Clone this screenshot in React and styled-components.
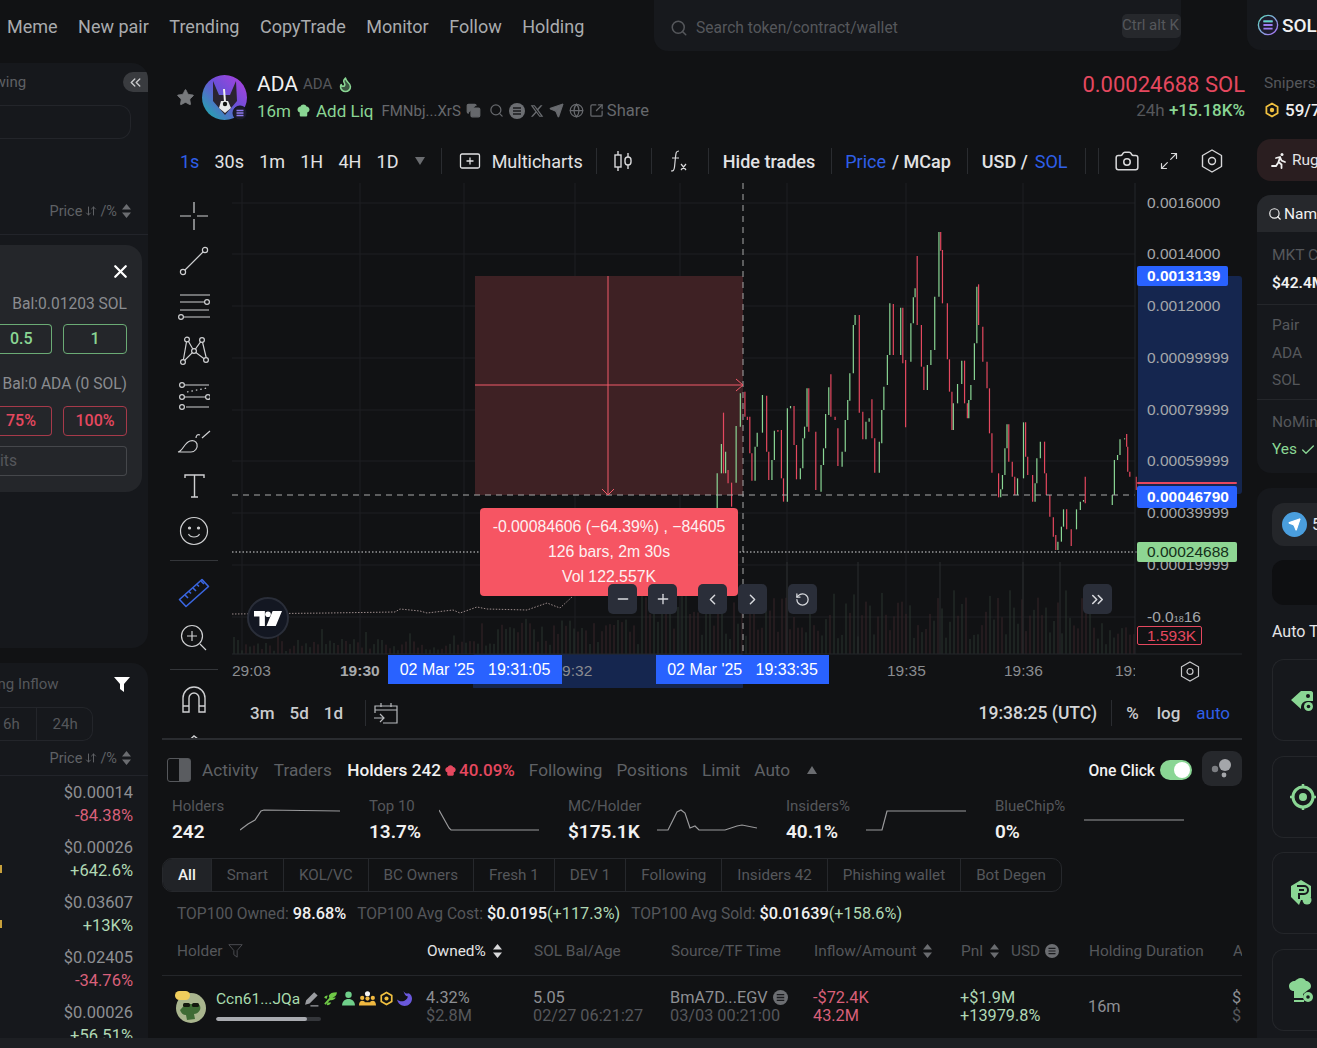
import React from 'react';
import styled, { createGlobalStyle } from 'styled-components';
import {
  ArrowDownUp, Check, ChevronLeft, ChevronRight, ChevronsLeft, ChevronsRight, Camera, Copy, Flame, Globe,
  Maximize2, Minus, Plus, RotateCcw, Search, Send, SquareArrowOutUpRight, Star, X,
} from 'lucide-react';

const GlobalStyle = createGlobalStyle`
  html, body { margin: 0; padding: 0; background: #111214; overflow: hidden; }
  body { font-family: Roboto, "Liberation Sans", sans-serif; color: #e4e4e6; }
  * { box-sizing: border-box; }
`;

const green = '#8ad694';
const red = '#e5485f';
const blue = '#2f5fe8';
const muted = '#5f6165';

// candle wicks read off the reference: [x, top, bottom, colour] in crop coordinates
const candleRows = [
  [49,850,955,'g'],[61,762,850,'g'],[67,668,850,'r'],[73,785,850,'g'],[80,840,880,'r'],[90,878,950,'r'],[103,708,878,'g'],
  [115,610,710,'g'],[128,605,680,'r'],[135,680,690,'r'],[142,680,790,'r'],[148,790,872,'r'],[157,770,872,'g'],[163,728,770,'g'],
  [178,615,728,'g'],[190,617,785,'r'],[196,785,870,'r'],[205,810,870,'g'],[212,722,810,'g'],[222,720,725,'r'],[232,720,865,'r'],
  [238,865,935,'r'],[249,655,935,'g'],[258,648,655,'g'],[268,648,765,'r'],[275,765,868,'r'],[286,835,868,'g'],[293,745,835,'g'],
  [298,710,745,'g'],[305,595,710,'g'],[310,595,725,'r'],[330,725,900,'r'],[345,825,905,'g'],[352,775,825,'g'],[358,672,775,'g'],
  [367,592,675,'g'],[373,553,680,'r'],[385,680,690,'r'],[393,715,828,'r'],[405,785,830,'g'],[414,690,785,'g'],[421,630,690,'g'],
  [427,550,632,'g'],[437,405,550,'g'],[442,375,405,'g'],[454,375,668,'r'],[464,665,748,'r'],[473,695,748,'g'],[482,685,695,'g'],
  [490,628,745,'r'],[498,745,848,'r'],[511,755,848,'g'],[518,660,760,'g'],[524,590,660,'g'],[534,495,585,'g'],[541,340,495,'g'],
  [551,342,495,'r'],[572,353,495,'g'],[578,353,520,'r'],[586,510,712,'r'],[601,400,515,'g'],[608,322,400,'g'],[613,295,322,'g'],
  [619,198,405,'r'],[631,405,530,'r'],[638,530,600,'r'],[648,525,600,'g'],[658,480,525,'g'],[669,320,480,'g'],[681,126,320,'g'],
  [686,126,182,'r'],[691,180,340,'r'],[705,340,508,'r'],[711,508,605,'r'],[718,605,720,'r'],[722,640,720,'g'],[734,582,640,'g'],
  [746,512,582,'g'],[754,512,640,'r'],[762,640,685,'r'],[766,630,685,'g'],[772,585,630,'g'],[782,460,570,'g'],[789,290,460,'g'],
  [794,283,405,'r'],[806,410,515,'r'],[818,515,595,'r'],[825,595,730,'r'],[832,730,848,'r'],[851,850,922,'r'],[857,898,922,'g'],
  [862,855,898,'g'],[869,775,855,'g'],[875,703,775,'g'],[880,703,815,'r'],[890,815,860,'r'],[897,860,915,'r'],[905,865,915,'g'],
  [922,697,865,'g'],[928,697,800,'r'],[934,800,855,'r'],[948,855,935,'r'],[955,880,935,'g'],[960,805,880,'g'],[970,755,805,'g'],
  [982,755,850,'r'],[987,850,915,'r'],[997,915,980,'r'],[1007,982,1040,'r'],[1014,1035,1080,'r'],[1020,1055,1080,'g'],
  [1030,1010,1055,'g'],[1036,958,1010,'g'],[1045,958,1018,'r'],[1058,1018,1068,'r'],[1073,958,1018,'g'],[1084,935,960,'g'],
  [1093,930,935,'g'],[1098,860,940,'r'],[1175,915,945,'g'],[1181,810,915,'g'],[1190,795,810,'g'],[1197,748,795,'g'],
  [1210,745,748,'g'],[1216,732,770,'r'],[1219,770,845,'r'],[1225,845,860,'r'],[1243,860,900,'r'],
];

const candles = candleRows.map(([x, top, bottom, c]) => ({
  x: 700 + x / 2.85, top: 190 + top / 3, bottom: 190 + bottom / 3, color: c === 'g' ? green : red,
}));

const volumeBars = Array.from({ length: 226 }, (_, i) => {
  const x = 234 + i * 4;
  const noise = Math.abs(Math.sin(i * 12.9898) * 43758.5453) % 1;
  let h = 3 + noise * 12;
  if (i % 11 === 0) h += 14;
  if (x > 470) h = 8 + noise * 28;
  if (x > 640) h = 15 + noise * 50;
  if (x > 1100) h = 6 + noise * 28;
  return { x, h, up: Math.floor(noise * 7) % 2 === 0 };
});

const volumeSpikes = [787, 858, 940, 1023, 1060];

const priceTicks = [
  ['0.0016000', 203], ['0.0014000', 254], ['0.0012000', 306], ['0.00099999', 358], ['0.00079999', 410],
  ['0.00059999', 461], ['0.00039999', 513], ['0.00019999', 565],
];

const hLines = [203, 254, 306, 358, 410, 461, 513, 565, 617];
const vLines = [242, 360, 464, 575, 680, 787, 906, 1023];
const timeframes = ['30s', '1m', '1H', '4H', '1D'];
const filters = ['Smart', 'KOL/VC', 'BC Owners', 'Fresh 1', 'DEV 1', 'Following', 'Insiders 42', 'Phishing wallet', 'Bot Degen'];
const tabsBefore = ['Activity', 'Traders'];
const tabsAfter = ['Following', 'Positions', 'Limit', 'Auto'];
const stats = [
  { label: 'Holders', value: '242', w: 68, points: '0,26 8,20 15,16 21,7 24,6 100,7' },
  { label: 'Top 10', value: '13.7%', w: 70, points: '0,6 10,24 12,26 100,26' },
  { label: 'MC/Holder', value: '$175.1K', w: 89, points: '0,26 11,26 20,8 24,6 28,9 33,24 38,22 42,26 68,26 80,22 85,21 100,24' },
  { label: 'Insiders%', value: '40.1%', w: 80, points: '0,26 16,26 21,7 100,7' },
  { label: 'BlueChip%', value: '0%', w: 89, points: '0,16 100,16' },
];
const sidePrices = [
  ['$0.00014', '-84.38%', false, false],
  ['$0.00026', '+642.6%', true, true],
  ['$0.03607', '+13K%', true, true],
  ['$0.02405', '-34.76%', false, false],
  ['$0.00026', '+56.51%', true, false],
];

const Root = styled.div`
  width: 100vw;
  height: 100vh;
  overflow: hidden;
  display: flex;
  flex-direction: column;
  background: #111214;
`;

const TopBar = styled.header`
  height: 54px;
  flex: none;
  display: flex;
  align-items: flex-start;
  padding-left: 7px;
`;

const TopNav = styled.nav`
  display: flex;
  flex: none;
  gap: 20.5px;
  width: 647px;
  padding-top: 16px;
  font-size: 18px;
  line-height: 22px;
  color: #a9abae;
`;

const SearchBox = styled.div`
  width: 527px;
  height: 51px;
  flex: none;
  padding: 4px 0 0 16px;
  border-radius: 0 0 14px 14px;
  background: #17191d;
  display: flex;
  align-items: center;
  gap: 8px;
  color: #55575b;
  font-size: 15.6px;
`;

const Kbd = styled.span`
  margin-left: auto;
  margin-top: -4px;
  width: 59px;
  height: 24px;
  border-radius: 5px;
  background: #26282c;
  color: #55575b;
  font-size: 15px;
  line-height: 23px;
  white-space: nowrap;
  overflow: hidden;
`;

const NetworkChip = styled.div`
  margin-left: 66px;
  flex: none;
  width: 120px;
  height: 50px;
  border-radius: 0 0 0 14px;
  background: #16181c;
  display: flex;
  align-items: center;
  gap: 3px;
  padding-left: 10px;
  font-size: 19px;
  font-weight: 500;
  color: #f0f0f0;
`;

const Body = styled.div`
  display: flex;
  height: 984px;
  flex: none;
`;

const Sidebar = styled.aside`
  width: 148px;
  flex: none;
  padding-top: 9px;
  display: flex;
  flex-direction: column;
  gap: 15px;
`;

const SidePanel = styled.section`
  background: #16181c;
  border-radius: ${p => (p.$bottom ? '0 16px 0 0' : '0 16px 16px 0')};
  height: ${p => p.$h}px;
  overflow: hidden;
  font-size: 15px;
  color: ${muted};
`;

const SideHeading = styled.div`
  display: flex;
  justify-content: space-between;
  align-items: center;
  height: 20px;
  margin-top: 9px;
  margin-left: ${p => p.$ml}px;
  white-space: nowrap;
`;

const Collapse = styled.button`
  width: 25px;
  height: 20px;
  border: 0;
  padding: 0;
  border-radius: 10px 0 0 10px;
  background: #393b3f;
  color: #c6c7c9;
  display: flex;
  align-items: center;
  justify-content: center;
`;

const SideSearch = styled.div`
  width: 131px;
  height: 34px;
  margin-top: 13px;
  border: 1px solid #23252a;
  border-left: 0;
  border-radius: 0 12px 12px 0;
`;

const PriceSort = styled.div`
  display: flex;
  justify-content: flex-end;
  align-items: center;
  gap: 3px;
  padding-right: 17px;
  height: ${p => p.$h}px;
  margin-top: ${p => p.$mt}px;
  border-bottom: 1px solid #22242a;
  font-size: 14.5px;
  white-space: nowrap;
`;

const SortStack = styled.svg`
  width: 9px;
  height: 14px;
  margin-left: 2px;
  fill: ${p => p.$color || '#6a6c70'};
  flex: none;
`;

const TradeCard = styled.div`
  width: 142px;
  height: 247px;
  margin-top: 10px;
  padding: 16px 15px 0 0;
  border-radius: 0 16px 16px 0;
  background: #24262a;
  display: flex;
  flex-direction: column;
  align-items: flex-end;
  font-size: 15.6px;
  color: #8a8c90;
  white-space: nowrap;
`;

const CloseButton = styled.div`
  color: #fff;
  height: 24px;
  margin-bottom: 10px;
  margin-right: -4px;
`;

const BalanceLine = styled.span`
  margin-top: ${p => p.$mt ?? 0}px;
`;

const QuickRow = styled.div`
  display: flex;
  gap: 11px;
  margin-top: ${p => p.$mt}px;
`;

const QuickButton = styled.div`
  width: ${p => p.$w}px;
  height: 30px;
  border: 1px solid ${p => (p.$sell ? '#a63a4a' : '#6bab75')};
  border-left-width: ${p => (p.$cut ? 0 : 1)}px;
  border-radius: ${p => (p.$cut ? '0 4px 4px 0' : '4px')};
  color: ${p => (p.$sell ? red : green)};
  font-size: 16px;
  font-weight: 500;
  line-height: 28px;
  text-align: ${p => (p.$cut ? 'left' : 'center')};
  padding-left: ${p => p.$pl ?? 0}px;
`;

const LimitInput = styled.div`
  width: 127px;
  height: 30px;
  margin-top: 10px;
  border: 1px solid #45474b;
  border-left: 0;
  border-radius: 0 4px 4px 0;
  color: #55575b;
  line-height: 28px;
`;

const FilterHead = styled.div`
  display: flex;
  justify-content: space-between;
  align-items: center;
  height: 20px;
  margin: 11px 17px 0 -36px;
  white-space: nowrap;
  font-size: 15px;
  color: #55575b;
`;

const RangeTabs = styled.div`
  display: flex;
  width: 93px;
  height: 34px;
  margin-top: 13px;
  border: 1px solid #23252a;
  border-left: 0;
  border-radius: 0 10px 10px 0;
  color: #55575b;
`;

const RangeTab = styled.span`
  line-height: 32px;
  width: ${p => p.$w}px;
  padding-left: ${p => p.$pl}px;
  border-left: ${p => (p.$line ? '1px solid #23252a' : '0')};
`;

const SideRow = styled.div`
  height: 55px;
  padding-right: 15px;
  position: relative;
  display: flex;
  flex-direction: column;
  align-items: flex-end;
  justify-content: center;
  font-size: 16.5px;
  line-height: 23px;
  color: #8d8f93;
`;

const SideChange = styled.span`
  color: ${p => (p.$up ? '#b0d8b4' : '#d9607a')};
`;

const EdgeMark = styled.i`
  position: absolute;
  left: 0;
  top: 34px;
  width: 2px;
  height: 8px;
  background: #c9a13c;
`;

const Main = styled.main`
  margin-left: 14px;
  padding-top: 9px;
  flex: none;
  width: 1155px;
`;

const TokenHeader = styled.div`
  height: 67px;
  display: flex;
  white-space: nowrap;
`;

const TokenLeft = styled.div`
  flex: 1;
  display: flex;
  align-items: center;
  padding: 2px 0 0 14px;
  color: #77797c;
`;

const Avatar = styled.svg`
  width: 45px;
  height: 45px;
  margin: 0 10px 0 7px;
  flex: none;
`;

const TokenLines = styled.div`
  display: flex;
  flex-direction: column;
  gap: 1px;
`;

const TokenName = styled.div`
  display: flex;
  align-items: center;
  gap: 5px;
  height: 25px;
  font-size: 21px;
  color: #f1f1f1;
`;

const TokenTicker = styled.span`
  font-size: 15px;
  color: #55575b;
`;

const TokenMeta = styled.div`
  display: flex;
  align-items: center;
  height: 26px;
  gap: 5px;
  color: #66686c;
  font-size: 15px;
`;

const GreenText = styled.span`
  color: ${green};
  font-size: 17px;
`;

const Address = styled.span`
  margin: 0 0 0 3px;
  font-size: 15px;
`;

const ShareText = styled.span`
  margin-left: -2px;
  font-size: 16.5px;
`;

const PriceBlock = styled.div`
  flex: none;
  text-align: right;
  padding-top: 9px;
`;

const LastPrice = styled.div`
  color: ${red};
  font-size: 22px;
  line-height: 25px;
`;

const DayChange = styled.div`
  margin-top: 1px;
  font-size: 17px;
  line-height: 24px;
  color: #55575b;
  b {
    color: ${green};
    font-weight: 500;
  }
`;

const SnipersBlock = styled.div`
  flex: none;
  width: 53px;
  margin-left: 19px;
  padding-top: 8px;
  font-size: 15.5px;
  color: #55575b;
  line-height: 25px;
`;

const SnipersValue = styled.div`
  display: flex;
  align-items: center;
  gap: 5px;
  margin-top: 2px;
  color: #f0f0f0;
  font-size: 17px;
  font-weight: 500;
  line-height: 24px;
  svg {
    flex: none;
  }
`;

const Lower = styled.div`
  display: flex;
  gap: 15px;
  padding-top: 9px;
`;

const Center = styled.div`
  width: 1080px;
  flex: none;
`;

const Toolbar = styled.div`
  height: 44px;
  display: flex;
  align-items: center;
  padding-left: 18px;
  font-size: 18px;
  color: #e2e2e4;
  white-space: nowrap;
`;

const ToolLabel = styled.span`
  margin-right: ${p => p.$mr ?? 0}px;
  margin-left: ${p => p.$ml ?? 0}px;
  color: ${p => (p.$active ? blue : 'inherit')};
  font-weight: ${p => (p.$medium ? 500 : 400)};
`;

const ToolSep = styled.i`
  width: 1px;
  height: 26px;
  background: #2a2c30;
  margin: 0 ${p => p.$r ?? 14}px 0 ${p => p.$l ?? 14}px;
  flex: none;
`;

const ToolIcon = styled.span`
  display: flex;
  flex: none;
  margin-left: ${p => p.$ml ?? 0}px;
  color: #d8d8da;
`;

const Triangle = styled.i`
  width: 0;
  height: 0;
  border-left: 5.5px solid transparent;
  border-right: 5.5px solid transparent;
  border-${p => (p.$up ? 'bottom' : 'top')}: 8px solid #6a6c70;
  margin-left: ${p => p.$ml}px;
  flex: none;
`;

const ChartArea = styled.div`
  height: 557px;
  display: flex;
  border-bottom: 2px solid #2a2c30;
`;

const ToolColumn = styled.div`
  width: 70px;
  flex: none;
  height: 555px;
  overflow: hidden;
  padding: 10px 6px 0 0;
  display: flex;
  flex-direction: column;
  align-items: center;
`;

const ToolItem = styled.div`
  height: 45px;
  flex: none;
  display: flex;
  align-items: center;
  justify-content: center;
`;

const ToolDivider = styled.i`
  width: 48px;
  height: 1px;
  flex: none;
  background: #34363a;
  margin: ${p => p.$mt}px 0 ${p => p.$mb}px;
`;

const PlotColumn = styled.div`
  flex: 1;
  min-width: 0;
`;

const Plot = styled.div`
  position: relative;
  width: 1010px;
  height: 505px;
  overflow: hidden;
`;

const PlotSvg = styled.svg`
  display: block;
  font-family: "Liberation Sans", Arial, sans-serif;
`;

const MeasureBox = styled.div`
  position: absolute;
  left: 248px;
  top: 325px;
  width: 258px;
  height: 88px;
  border-radius: 4px;
  background: #f65563;
  color: #fdf0f1;
  font-family: "Liberation Sans", Arial, sans-serif;
  font-size: 15.8px;
  line-height: 25px;
  padding-top: 6px;
  text-align: center;
  white-space: nowrap;
`;

const ChartButton = styled.button`
  position: absolute;
  left: ${p => p.$x}px;
  top: 401px;
  width: 29px;
  height: 30px;
  padding: 0;
  border: 0;
  border-radius: 5px;
  background: #2a2e39;
  color: #d8dade;
  display: flex;
  align-items: center;
  justify-content: center;
`;

const ChartBadge = styled.div`
  position: absolute;
  left: 15px;
  top: 414px;
  width: 42px;
  height: 42px;
  border-radius: 50%;
  background: #131722;
  border: 2px solid #2a2e39;
  display: flex;
  align-items: center;
  justify-content: center;
`;

const PriceTag = styled.div`
  position: absolute;
  left: 905px;
  top: ${p => p.$top}px;
  width: ${p => p.$w}px;
  height: ${p => p.$h ?? 20}px;
  border-radius: 2px;
  background: ${p => p.$bg};
  color: ${p => p.$fg};
  font-family: "Liberation Sans", Arial, sans-serif;
  font-size: 15.5px;
  font-weight: ${p => p.$weight ?? 400};
  line-height: ${p => p.$h ?? 20}px;
  padding-left: 10px;
`;

const VolumeTag = styled(PriceTag)`
  border: 1px solid ${red};
  background: #111214;
  line-height: 17px;
  padding-left: 9px;
`;

const TimeTag = styled.div`
  position: absolute;
  left: ${p => p.$x}px;
  top: 472px;
  width: ${p => p.$w}px;
  height: 29px;
  background: #2962ff;
  color: #fff;
  font-family: "Liberation Sans", Arial, sans-serif;
  font-size: 16px;
  line-height: 29px;
  text-align: center;
  white-space: pre;
`;

const ChartFoot = styled.div`
  height: 50px;
  display: flex;
  align-items: center;
  padding: 0 12px 0 18px;
  font-size: 17px;
  font-weight: 500;
  color: #c9cbce;
`;

const RangeLabel = styled.span`
  margin-right: ${p => p.$mr ?? 15}px;
`;

const FootClock = styled.span`
  margin-left: auto;
  font-size: 17.5px;
  color: #d4d6d8;
`;

const Holders = styled.section`
  height: 298px;
  overflow: hidden;
`;

const TabBar = styled.div`
  height: 48px;
  display: flex;
  align-items: center;
  font-size: 17.2px;
  color: ${muted};
  white-space: nowrap;
  padding-top: 12px;
`;

const TabText = styled.span`
  margin-right: ${p => p.$mr ?? 14}px;
  color: ${p => (p.$on ? '#f1f1f1' : 'inherit')};
  font-weight: ${p => (p.$on ? 500 : 400)};
`;

const DrawerToggle = styled.i`
  margin: 0 11px 0 5px;
  width: 24px;
  height: 24px;
  border: 1px solid #55575b;
  border-radius: 3px;
  background: linear-gradient(to right, #111214 50%, #5a5c60 50%);
  flex: none;
`;

const RedRate = styled.span`
  color: ${red};
  margin: 0 14px 0 2px;
  font-weight: 500;
  font-size: 17px;
`;

const OneClick = styled.div`
  margin-left: auto;
  display: flex;
  align-items: center;
  gap: 5px;
  color: #f1f1f1;
  font-size: 15.7px;
  font-weight: 500;
`;

const Switch = styled.i`
  width: 32px;
  height: 20px;
  padding: 2px;
  border-radius: 10px;
  background: ${green};
  display: flex;
  justify-content: flex-end;
  &::after {
    content: '';
    width: 16px;
    height: 16px;
    border-radius: 50%;
    background: #fff;
  }
`;

const BubbleButton = styled.div`
  width: 40px;
  height: 35px;
  margin-left: 5px;
  margin-top: -4px;
  border-radius: 9px;
  background: #26282c;
  display: flex;
  align-items: center;
  justify-content: center;
`;

const StatRow = styled.div`
  height: 70px;
  display: grid;
  grid-template-columns: 197px 199px 218px 209px 200px;
  padding: 8px 0 0 10px;
`;

const Stat = styled.div`
  display: flex;
  align-items: flex-start;
`;

const Spark = styled.svg`
  margin-top: 8px;
  flex: none;
`;

const StatText = styled.div`
  width: ${p => p.$w}px;
  flex: none;
  font-size: 15px;
  line-height: 20px;
  color: #55575b;
  b {
    display: block;
    margin-top: 6px;
    font-size: 19px;
    line-height: 20px;
    font-weight: 600;
    color: #f1f1f1;
  }
`;

const FilterTabs = styled.div`
  display: inline-flex;
  height: 34px;
  border: 1px solid #26282c;
  border-radius: 10px;
  overflow: hidden;
  font-size: 15.2px;
  color: #55575b;
  white-space: nowrap;
  vertical-align: top;
`;

const FilterTab = styled.span`
  padding: 0 15px;
  line-height: 32px;
  border-left: ${p => (p.$first ? '0' : '1px solid #26282c')};
  background: ${p => (p.$first ? '#212327' : 'transparent')};
  color: ${p => (p.$first ? '#f1f1f1' : 'inherit')};
  font-weight: ${p => (p.$first ? 500 : 400)};
`;

const Summary = styled.div`
  display: flex;
  height: 42px;
  align-items: center;
  padding-left: 15px;
  font-size: 15.6px;
  color: #55575b;
  white-space: nowrap;
  b {
    color: #f1f1f1;
    font-size: 16.3px;
    font-weight: 500;
    margin-left: 4px;
  }
  em {
    color: #b0d8b4;
    font-size: 16.3px;
    font-style: normal;
  }
  span + span {
    margin-left: 11px;
  }
`;

const TableHead = styled.div`
  display: grid;
  grid-template-columns: 250px 107px 137px 143px 147px 128px 144px 30px;
  height: 42px;
  padding: 0 0 8px 15px;
  align-items: center;
  border-bottom: 1px solid #24262a;
  font-size: 15.4px;
  color: #55575b;
  white-space: nowrap;
`;

const HeadCell = styled.span`
  display: flex;
  align-items: center;
  gap: 5px;
  color: ${p => (p.$on ? '#e4e4e6' : 'inherit')};
`;

const UsdLabel = styled.span`
  margin-left: 7px;
`;

const TableRow = styled.div`
  display: grid;
  grid-template-columns: 252px 107px 137px 143px 147px 128px 144px 30px;
  height: 61px;
  padding: 0 0 0 12px;
  align-items: center;
  font-size: 16.3px;
  line-height: 18px;
  color: #8d8f93;
  white-space: nowrap;
`;

const HolderCell = styled.div`
  display: flex;
  gap: 10px;
  align-items: center;
`;

const HolderAvatar = styled.svg`
  width: 32px;
  height: 32px;
  flex: none;
`;

const HolderInfo = styled.div`
  margin-top: -3px;
`;

const HolderName = styled.div`
  display: flex;
  align-items: center;
  gap: 3px;
  color: #a9dcae;
  font-size: 15.5px;
`;

const OwnBar = styled.div`
  width: 105px;
  height: 4px;
  margin-top: 9px;
  border-radius: 2px;
  background: #34363a;
  overflow: hidden;
`;

const OwnFill = styled.div`
  height: 100%;
  background: #a9abb0;
  border-radius: 2px;
`;

const Cell = styled.div`
  color: ${p => p.$color || 'inherit'};
`;

const SubLine = styled.div`
  display: flex;
  align-items: center;
  gap: 5px;
  color: ${p => p.$color || '#55575b'};
`;

const Footer = styled.div`
  flex: 1;
  background: #1d1f23;
`;

const RightColumn = styled.div`
  width: 200px;
  flex: none;
  font-size: 16px;
  white-space: nowrap;
`;

const RugChip = styled.div`
  height: 42px;
  border-radius: 14px 0 0 14px;
  background: #2a1e20;
  display: flex;
  align-items: center;
  gap: 4px;
  padding-left: 14px;
  color: #e4e4e6;
  font-size: 15.5px;
`;

const InfoCard = styled.div`
  margin-top: 14px;
  height: 278px;
  border-radius: 14px 0 0 14px;
  background: #16181c;
  color: #55575b;
  font-size: 15.5px;
  overflow: hidden;
`;

const InfoHead = styled.div`
  height: 37px;
  background: #26282c;
  display: flex;
  align-items: center;
  gap: 2px;
  padding-left: 11px;
  color: #f1f1f1;
`;

const InfoBlock = styled.div`
  padding: ${p => p.$pad};
  line-height: 27.5px;
  border-bottom: ${p => (p.$last ? '0' : '1px solid #24262a')};
  b {
    color: #f1f1f1;
    font-weight: 600;
  }
`;

const YesRow = styled.div`
  display: flex;
  align-items: center;
  gap: 3px;
  color: ${green};
`;

const ToolsCard = styled.div`
  margin-top: 15px;
  height: 550px;
  padding: 15px 0 0 15px;
  border-radius: 14px 0 0 0;
  background: #16181c;
`;

const TelegramButton = styled.div`
  height: 43px;
  border-radius: 12px 0 0 12px;
  background: #24262a;
  display: flex;
  align-items: center;
  gap: 5px;
  padding-left: 10px;
  color: #e4e4e6;
`;

const TelegramDot = styled.i`
  width: 25px;
  height: 25px;
  border-radius: 50%;
  background: #4a9edd;
  display: flex;
  align-items: center;
  justify-content: center;
  color: #fff;
`;

const DarkButton = styled.div`
  height: 45px;
  margin-top: 14px;
  border-radius: 12px 0 0 12px;
  background: #0e0f11;
`;

const AutoLabel = styled.div`
  margin: 17px 0 17px;
  line-height: 20px;
  color: #e4e4e6;
`;

const FeatureCard = styled.div`
  height: 82px;
  margin-bottom: 14.5px;
  border: 1px solid #24262a;
  border-right: 0;
  border-radius: 12px 0 0 12px;
  padding-left: 16px;
  display: flex;
  align-items: center;
  color: ${green};
`;

const SolMark = ({ size = 24 }) => (
  <svg width={size} height={size} viewBox="0 0 24 24">
    <defs>
      <linearGradient id="solEdge" x1="0" y1="0" x2="1" y2="1">
        <stop offset="0" stopColor="#5fe0c0" />
        <stop offset="1" stopColor="#a96bf5" />
      </linearGradient>
    </defs>
    <circle cx="12" cy="12" r="10.5" fill="#1c1b2b" stroke="url(#solEdge)" strokeWidth="1.5" />
    <path d="M7 8h10M7 12h10M7 16h10" strokeWidth="2" stroke="#9b7bf0" />
    <path d="M7 8h10" strokeWidth="2" stroke="#5fd8c4" />
  </svg>
);

const GrayCoin = ({ size = 16 }) => (
  <svg width={size} height={size} viewBox="0 0 16 16">
    <circle cx="8" cy="8" r="8" fill="#6c6e72" />
    <path d="M4 5h8M4 8h8M4 11h8" stroke="#1a1b1e" strokeWidth="1.4" />
  </svg>
);

const ChefHat = ({ size = 15, color = green }) => (
  <svg width={size} height={size} viewBox="0 0 16 16" fill={color}>
    <path d="M8 1.5c-1.6 0-2.8.9-3.2 2.1C3 3.8 1.6 5.2 1.6 7c0 1.5 1 2.8 2.4 3.2V13c0 .8.6 1.4 1.4 1.4h5.2c.8 0 1.4-.6 1.4-1.4v-2.8c1.4-.4 2.4-1.7 2.4-3.2 0-1.8-1.4-3.2-3.2-3.4C10.8 2.4 9.6 1.5 8 1.5z" />
  </svg>
);

const XLogo = () => (
  <svg width="14" height="14" viewBox="0 0 24 24" fill="#6a6c70">
    <path d="M18.2 2h3.3l-7.2 8.3L22.8 22h-6.7l-5.2-6.8L4.9 22H1.6l7.7-8.8L1.2 2h6.8l4.7 6.2L18.2 2zm-1.2 18h1.8L7 3.9H5L17 20z" />
  </svg>
);

const Target = ({ size = 16, color = '#f0c040' }) => (
  <svg width={size} height={size} viewBox="0 0 16 16" fill="none" stroke={color} strokeWidth="1.8">
    <path d="M8 1.5L13.6 4.7V11.3L8 14.5 2.4 11.3V4.7z" strokeLinejoin="round" />
    <circle cx="8" cy="8" r="2.2" fill={color} stroke="none" />
  </svg>
);

const TargetRing = () => (
  <svg width="28" height="28" viewBox="0 0 28 28" fill="none" stroke={green} strokeWidth="3">
    <circle cx="14" cy="14" r="10" />
    <circle cx="14" cy="14" r="4" fill={green} stroke="none" />
    <path d="M14 1v3M14 24v3M1 14h3M24 14h3" strokeWidth="2.5" />
  </svg>
);

const Sort = ({ color }) => (
  <SortStack viewBox="0 0 9 14" $color={color}>
    <path d="M4.5 0L9 5.5H0zM4.5 14L0 8.5h9z" />
  </SortStack>
);

const Funnel = ({ size = 18, color = '#fff', outline }) => (
  <svg width={size} height={size} viewBox="0 0 18 18" fill={outline ? 'none' : color} stroke={outline ? color : 'none'} strokeWidth="1">
    <path d="M1 2h16l-6 7v8l-4-3V9z" strokeLinejoin="round" />
  </svg>
);

const DogAvatar = () => (
  <Avatar viewBox="0 0 45 45">
    <defs>
      <linearGradient id="dogBg" x1="0" y1="1" x2="1" y2="0">
        <stop offset="0" stopColor="#14b8a6" />
        <stop offset="0.55" stopColor="#6d4fd8" />
        <stop offset="1" stopColor="#b43fe0" />
      </linearGradient>
    </defs>
    <circle cx="22.5" cy="22.5" r="22.5" fill="url(#dogBg)" />
    <path d="M11 6l6 14h11l6-14 1 20-12 14-12-14z" fill="#2a2430" />
    <path d="M19 26h7l3 7-6 5-6-5z" fill="#e8e8ea" />
    <path d="M22 14l1 13" stroke="#f0f0f0" strokeWidth="2" />
    <circle cx="23" cy="29" r="2.2" fill="#111" />
    <circle cx="38" cy="38" r="7" fill="#1c1b2b" stroke="#10131a" strokeWidth="1" />
    <path d="M34.5 35.5h7M34.5 38h7M34.5 40.5h7" stroke="#8e7bf0" strokeWidth="1.3" />
  </Avatar>
);

const strokeIcon = { fill: 'none', stroke: '#cfd0d2', strokeWidth: 1.2 };

const Crosshair = () => (
  <svg width="30" height="30" viewBox="0 0 30 30" {...strokeIcon}>
    <path d="M15 1v11M15 18v11M1 15h11M18 15h11" />
  </svg>
);

const TrendTool = () => (
  <svg width="30" height="30" viewBox="0 0 30 30" {...strokeIcon}>
    <path d="M5 25L25 5" />
    <circle cx="4" cy="26" r="2.6" fill="#111214" />
    <circle cx="26" cy="4" r="2.6" fill="#111214" />
  </svg>
);

const ChannelTool = () => (
  <svg width="34" height="30" viewBox="0 0 34 30" {...strokeIcon}>
    <path d="M3 4h30M3 11h27M3 19h29M6 26h27" />
    <circle cx="30" cy="11" r="2.4" fill="#111214" />
    <circle cx="4" cy="26" r="2.4" fill="#111214" />
  </svg>
);

const PatternTool = () => (
  <svg width="32" height="30" viewBox="0 0 32 30" {...strokeIcon}>
    <path d="M5 26L9 3l7 12L24 4l5 21-13-10z" />
    <circle cx="5" cy="26" r="2.4" fill="#111214" />
    <circle cx="9" cy="3.5" r="2.4" fill="#111214" />
    <circle cx="16" cy="15" r="2.4" fill="#111214" />
    <circle cx="24" cy="4" r="2.4" fill="#111214" />
    <circle cx="28" cy="24" r="2.4" fill="#111214" />
  </svg>
);

const FibTool = () => (
  <svg width="32" height="30" viewBox="0 0 32 30" {...strokeIcon}>
    <path d="M7 4h24M6 16h22M8 26h23" />
    <path d="M9 11l20-4" strokeDasharray="1.5 3" />
    <circle cx="4" cy="4" r="2.4" />
    <circle cx="4" cy="16" r="2.4" />
    <circle cx="30" cy="16" r="2.4" />
    <circle cx="4" cy="26" r="2.4" />
  </svg>
);

const BrushTool = () => (
  <svg width="34" height="30" viewBox="0 0 34 30" {...strokeIcon}>
    <path d="M1 26c5-1 6-9 12-11 3-1 6 0 7 3 1 4-2 8-6 8zM19 12c0-3 2-4 4-3M25 12l8-7" />
  </svg>
);

const TextTool = () => (
  <svg width="30" height="30" viewBox="0 0 30 30" {...strokeIcon} strokeWidth="1.4">
    <path d="M6 7V4h19v3M15.5 4v22M12 26h7" />
  </svg>
);

const SmileTool = () => (
  <svg width="30" height="30" viewBox="0 0 30 30" {...strokeIcon}>
    <circle cx="15" cy="15" r="13.5" />
    <path d="M9.5 18c2 4 9 4 11 0" />
    <circle cx="10.5" cy="12" r="1" fill="#cfd0d2" />
    <circle cx="19.5" cy="12" r="1" fill="#cfd0d2" />
  </svg>
);

const RulerTool = () => (
  <svg width="32" height="30" viewBox="0 0 32 30" fill="none" stroke="#3a66e0" strokeWidth="1.6">
    <path d="M1.5 21.5L24 1.5l6.5 7L8 28.5z" strokeLinejoin="round" />
    <path d="M7 17l3 3M11 13.5l2 2M15 10l3 3M19 6.5l2 2M23 3l3 3" />
  </svg>
);

const ZoomTool = () => (
  <svg width="30" height="30" viewBox="0 0 30 30" {...strokeIcon}>
    <circle cx="13" cy="13" r="10.5" />
    <path d="M13 8v10M8 13h10M21 21l6 6" />
  </svg>
);

const MagnetTool = () => (
  <svg width="26" height="28" viewBox="0 0 26 28" {...strokeIcon} strokeWidth="1.4">
    <path d="M2 26V12a11 11 0 0122 0v14h-6V12a5 5 0 00-10 0v14zM2 20h6M18 20h6" />
  </svg>
);

const LockTool = () => (
  <svg width="26" height="24" viewBox="0 0 26 24" {...strokeIcon} strokeWidth="1.4">
    <path d="M3 12L13 3l8 6-10 10M8 8l8 6" />
  </svg>
);

const LayoutPlus = () => (
  <svg width="22" height="20" viewBox="0 0 22 20" fill="none" stroke="#e2e2e4" strokeWidth="1.3">
    <rect x="1.5" y="3" width="19" height="14" rx="1.5" />
    <path d="M11 6.5v7M7.5 10h7" />
  </svg>
);

const CandleIcon = () => (
  <svg width="20" height="22" viewBox="0 0 20 22" fill="none" stroke="#d8d8da" strokeWidth="1.4">
    <rect x="2" y="5" width="6" height="12" />
    <path d="M5 1v4M5 17v4" />
    <rect x="12" y="7" width="6" height="8" rx="3" />
    <path d="M15 3v4M15 15v4" />
  </svg>
);

const FormulaIcon = () => (
  <svg width="22" height="24" viewBox="0 0 22 24" fill="none" stroke="#d8d8da" strokeWidth="1.2">
    <path d="M11 2C8 2 8 4 7.5 8L6.5 18C6 22 5 22 3 22M4 9h7M13 15l5 6M18 15l-5 6" />
  </svg>
);

const HexIcon = ({ size = 26 }) => (
  <svg width={size} height={size} viewBox="0 0 26 26" fill="none" stroke="#d8d8da" strokeWidth="1.4">
    <path d="M13 2l9.5 5.5v11L13 24l-9.5-5.5v-11z" strokeLinejoin="round" />
    <circle cx="13" cy="13" r="3.5" />
  </svg>
);

const CalendarIcon = () => (
  <svg width="26" height="24" viewBox="0 0 26 24" fill="none" stroke="#b8babd" strokeWidth="1.2">
    <path d="M2 12V5h22v17H10M2 9h22M8 2v4M18 2v4M1 17h10M7 13l4 4-4 4" />
  </svg>
);

const RunnerIcon = () => (
  <svg width="17" height="17" viewBox="0 0 17 17" fill="none" stroke="#f0f0f0" strokeWidth="1.8" strokeLinecap="round">
    <circle cx="11" cy="2.6" r="1.5" fill="#f0f0f0" stroke="none" />
    <path d="M5 6l4-1 1.5 3.5L14 10M9 5.5L7.5 10l3 2.5V16M7 11l-2 3H1" />
  </svg>
);

const TvLogo = () => (
  <svg width="28" height="15" viewBox="0 0 36 19" fill="#fff">
    <path d="M0 0h14v19H7V7H0zM24 0h12l-8 19H16z" />
    <circle cx="18" cy="4" r="3.6" />
  </svg>
);

const Bubbles = () => (
  <svg width="22" height="20" viewBox="0 0 22 20" fill="#a4a6aa">
    <circle cx="14" cy="7" r="6" />
    <circle cx="4" cy="11" r="3.2" fill="#7c7e82" />
    <circle cx="13" cy="17" r="2.4" />
  </svg>
);

const Pencil = () => (
  <svg width="16" height="16" viewBox="0 0 14 14" fill="#9a9ca0">
    <path d="M9.8 1l3 3-7 7-4 1 1-4zM6.5 12.4h7v1.2h-7z" />
  </svg>
);

const Leaf = () => (
  <svg width="16" height="16" viewBox="0 0 14 14" fill="#6fc946">
    <path d="M13 1c-4 0-6 1-7 3 0 1 .5 2 .5 2L2 11l1 1 4-4c2 .5 4-.5 5-2-1-.5-2 0-3 0 2-1 4-2 4-5zM2 6c0-1 1-2 3-2L4 7zM5 10l3 0c-1 2-3 3-4 2z" />
  </svg>
);

const Person = () => (
  <svg width="15" height="15" viewBox="0 0 14 14" fill="#6fcf8a">
    <circle cx="7" cy="3.5" r="3" />
    <path d="M1 13.5c0-3.5 2.5-6 6-6s6 2.5 6 6z" />
  </svg>
);

const Group = () => (
  <svg width="17" height="15" viewBox="0 0 16 14" fill="#f0b840">
    <circle cx="8" cy="2.5" r="2.4" fill="#f4f4f4" />
    <circle cx="3" cy="6.5" r="2" />
    <circle cx="8" cy="7" r="2" />
    <circle cx="13" cy="6.5" r="2" />
    <path d="M0 13.5c0-3 1.2-4.5 3-4.5s2.4 1 2.5 1.5h5C10.6 10 11.2 9 13 9s3 1.5 3 4.5z" />
  </svg>
);

const Moon = () => (
  <svg width="15" height="15" viewBox="0 0 14 14" fill="#6a58dc">
    <path d="M6 0c1 2 3 3 5 2 2 1 3 3 3 5 0 4-3 7-7 7-3 0-6-2-7-6 2 2 5 2 7 1 2-1 3-2 3-4-2 0-3-2-4-5z" />
  </svg>
);

const FrogAvatar = () => (
  <HolderAvatar viewBox="0 0 32 32">
    <circle cx="17" cy="17" r="15" fill="#a9b58e" />
    <path d="M6 19c3-3 5-6 9-6h8c3 0 4 3 3 6-2 3-4 4-6 4l1 5-8 1-1-5c-3 0-5-2-6-5z" fill="#3f6b35" />
    <rect x="9" y="12" width="7" height="4" rx="1.5" fill="#14180f" />
    <rect x="18" y="12" width="7" height="4" rx="1.5" fill="#14180f" />
    <rect x="1" y="0" width="15" height="9" rx="4.5" fill="#f0cd5c" />
  </HolderAvatar>
);

const TagIcon = () => (
  <svg width="26" height="26" viewBox="0 0 26 26" fill={green}>
    <path d="M2 13L12 4h10c1 0 2 1 2 2v8h-6a6 6 0 00-6 6v2z" />
    <circle cx="19.5" cy="19.5" r="4.5" />
    <circle cx="19.5" cy="19.5" r="1.8" fill="#16181c" />
    <circle cx="19" cy="9" r="2" fill="#16181c" />
  </svg>
);

const PumpIcon = () => (
  <svg width="24" height="28" viewBox="0 0 24 28" fill={green}>
    <path d="M12 1l10 6v11l-4 3h-6l-2 5-8-8V7z" />
    <path d="M8 7h7a4 4 0 010 8H10v5M10 11h5" fill="none" stroke="#16181c" strokeWidth="2" />
    <circle cx="18" cy="21" r="4.5" />
  </svg>
);

const HatTagIcon = () => (
  <svg width="26" height="26" viewBox="0 0 26 26" fill={green}>
    <path d="M12 1c-3 0-5 2-6 3C3 4 0 6 0 9c0 3 2 5 5 5v7h9v-4l5-4c2-1 3-2 3-4 0-3-3-5-5-5-1-2-3-3-5-3z" />
    <path d="M5 23h10v2H5z" />
    <circle cx="19" cy="20" r="5" />
    <circle cx="19" cy="20" r="1.8" fill="#16181c" />
  </svg>
);

function PriceChart() {
  return (
    <Plot>
      <PlotSvg width="1010" height="505" viewBox="232 183 1010 505">
        {hLines.map(y => <line key={y} x1="232" x2="1135" y1={y} y2={y} stroke="#1e1f22" />)}
        {vLines.map(x => <line key={x} x1={x} x2={x} y1="183" y2="654" stroke="#1e1f22" />)}
        <rect x="1138" y="276" width="104" height="218" rx="3" fill="#15264f" />
        <rect x="473" y="654" width="270" height="35" rx="2" fill="#15264f" />
        <rect x="475" y="276" width="268" height="219" fill="#3e2124" />
        {volumeBars.map(b => (
          <line key={b.x} x1={b.x} x2={b.x} y1="654" y2={654 - b.h} stroke={b.up ? '#2b352e' : '#382428'} />
        ))}
        {volumeSpikes.map(x => <line key={x} x1={x} x2={x} y1="654" y2="562" stroke="#2b2d2e" />)}
        <polyline
          fill="none"
          stroke="#9a8a8a"
          strokeDasharray="1.5 1.5"
          points="232,614 328,613 395,612 400,609 420,611 427,613 453,610 460,613 477,607 487,609 527,610 547,603 560,608 572,597"
        />
        {candles.map(c => (
          <line key={c.x} x1={c.x} x2={c.x} y1={c.top} y2={c.bottom} stroke={c.color} strokeWidth="1.2" />
        ))}
        <line x1="232" x2="1135" y1="495" y2="495" stroke="#a8a8a8" strokeDasharray="6 5" />
        <line x1="743" x2="743" y1="183" y2="654" stroke="#a8a8a8" strokeDasharray="6 5" />
        <line x1="232" x2="1137" y1="552" y2="552" stroke="#d8d8d8" strokeDasharray="1.5 2" />
        <path d="M475 385H743M736 379l7 6-7 6M608 276V495M602 489l6 6 6-6" fill="none" stroke="#f05a68" />
        <line x1="1135" x2="1135" y1="183" y2="654" stroke="#25272b" />
        <line x1="232" x2="1242" y1="654" y2="654" stroke="#25272b" />
        <path d="M227 644l-3.5 4 3.5 4" fill="none" stroke="#8a8a8a" strokeWidth="1.2" />
        <g fontSize="15.5" fill="#a4a6aa">
          {priceTicks.map(([t, y]) => <text key={t} x="1147" y={y + 4.5}>{t}</text>)}
          <text x="1147" y="622">-0.0<tspan fontSize="9">18</tspan>16</text>
        </g>
        <g fontSize="15.5" fill="#8a8c90">
          <text x="232" y="676">29:03</text>
          <text x="340" y="676" fontWeight="700" fill="#a8aaad">19:30</text>
          <text x="553.5" y="676">19:32</text>
          <text x="887" y="676">19:35</text>
          <text x="1004" y="676">19:36</text>
          <text x="1115" y="676">19:37</text>
        </g>
        <rect x="1135" y="655" width="107" height="33" fill="#111214" />
        <g transform="translate(1180 661)">
          <path d="M10 1l8.5 4.8v9.4L10 20l-8.5-4.8V5.800z" fill="none" stroke="#c8c9cb" strokeWidth="1.2" />
          <circle cx="10" cy="10.5" r="3" fill="none" stroke="#c8c9cb" strokeWidth="1.2" />
        </g>
      </PlotSvg>
      <PriceTag $top={83} $w={91} $bg="#2962ff" $fg="#fff" $weight={700}>0.0013139</PriceTag>
      <PriceTag $top={299} $w={100} $h={2} $bg="#e5485f" />
      <PriceTag $top={303} $w={100} $h={22} $bg="#2962ff" $fg="#fff" $weight={700}>0.00046790</PriceTag>
      <PriceTag $top={359} $w={100} $bg="#8ed693" $fg="#15301a">0.00024688</PriceTag>
      <VolumeTag $top={443} $w={65} $h={19} $fg={red}>1.593K</VolumeTag>
      <MeasureBox>
        -0.00084606 (−64.39%) , −84605<br />126 bars, 2m 30s<br />Vol 122.557K
      </MeasureBox>
      <ChartButton $x={376}><Minus size={16} /></ChartButton>
      <ChartButton $x={416}><Plus size={16} /></ChartButton>
      <ChartButton $x={466}><ChevronLeft size={17} /></ChartButton>
      <ChartButton $x={506}><ChevronRight size={17} /></ChartButton>
      <ChartButton $x={556}><RotateCcw size={15} /></ChartButton>
      <ChartButton $x={851}><ChevronsRight size={19} /></ChartButton>
      <ChartBadge><TvLogo /></ChartBadge>
      <TimeTag $x={156} $w={174}>{"02 Mar '25   19:31:05"}</TimeTag>
      <TimeTag $x={424} $w={173}>{"02 Mar '25   19:33:35"}</TimeTag>
    </Plot>
  );
}

function LeftRail() {
  return (
    <Sidebar>
      <SidePanel $h={585}>
        <SideHeading $ml={-38}>
          <span>Following</span>
          <Collapse><ChevronsLeft size={17} /></Collapse>
        </SideHeading>
        <SideSearch />
        <PriceSort $h={47} $mt={49}>
          Price<ArrowDownUp size={12} />/%<Sort />
        </PriceSort>
        <TradeCard>
          <CloseButton><X size={21} strokeWidth={2.6} /></CloseButton>
          <BalanceLine>Bal:0.01203 SOL</BalanceLine>
          <QuickRow $mt={11}>
            <QuickButton $w={53} $cut $pl={11}>0.5</QuickButton>
            <QuickButton $w={64}>1</QuickButton>
          </QuickRow>
          <BalanceLine $mt={21}>Bal:0 ADA (0 SOL)</BalanceLine>
          <QuickRow $mt={13}>
            <QuickButton $w={53} $sell $cut $pl={7}>75%</QuickButton>
            <QuickButton $w={64} $sell>100%</QuickButton>
          </QuickRow>
          <LimitInput>its</LimitInput>
        </TradeCard>
      </SidePanel>
      <SidePanel $h={375} $bottom>
        <FilterHead>
          <span>Trading Inflow</span>
          <Funnel />
        </FilterHead>
        <RangeTabs>
          <RangeTab $w={36} $pl={3}>6h</RangeTab>
          <RangeTab $w={57} $pl={16} $line>24h</RangeTab>
        </RangeTabs>
        <PriceSort $h={35} $mt={0}>
          Price<ArrowDownUp size={12} />/%<Sort />
        </PriceSort>
        {sidePrices.map(([price, change, up, mark]) => (
          <SideRow key={price + change}>
            {mark && <EdgeMark />}
            <span>{price}</span>
            <SideChange $up={up}>{change}</SideChange>
          </SideRow>
        ))}
      </SidePanel>
    </Sidebar>
  );
}

function TokenInfo() {
  return (
    <TokenHeader>
      <TokenLeft>
        <Star size={19} fill="#77797c" strokeWidth={1} />
        <DogAvatar />
        <TokenLines>
          <TokenName>
            ADA <TokenTicker>ADA</TokenTicker>
            <Flame size={17} color={green} fill={green} fillOpacity={0.35} strokeWidth={2.2} />
          </TokenName>
          <TokenMeta>
            <GreenText>16m</GreenText>
            <ChefHat />
            <GreenText>Add Liq</GreenText>
            <Address>FMNbj...XrS</Address>
            <Copy size={15} fill="#66686c" />
            <ToolIcon $ml={3}><Search size={15} color="#66686c" /></ToolIcon>
            <GrayCoin />
            <XLogo />
            <Send size={15} fill="#6a6c70" />
            <Globe size={15} />
            <SquareArrowOutUpRight size={15} />
            <ShareText>Share</ShareText>
          </TokenMeta>
        </TokenLines>
      </TokenLeft>
      <PriceBlock>
        <LastPrice>0.00024688 SOL</LastPrice>
        <DayChange>24h <b>+15.18K%</b></DayChange>
      </PriceBlock>
      <SnipersBlock>
        Snipers:
        <SnipersValue><Target />59/70</SnipersValue>
      </SnipersBlock>
    </TokenHeader>
  );
}

function ChartToolbar() {
  return (
    <Toolbar>
      <ToolLabel $active $mr={15}>1s</ToolLabel>
      {timeframes.map(t => <ToolLabel key={t} $mr={15.2}>{t}</ToolLabel>)}
      <Triangle $ml={1} />
      <ToolSep $l={16} $r={17} />
      <LayoutPlus />
      <ToolLabel $ml={11}>Multicharts</ToolLabel>
      <ToolSep $l={13} $r={16} />
      <CandleIcon />
      <ToolSep $l={18} $r={16} />
      <FormulaIcon />
      <ToolSep $l={18} $r={14} />
      <ToolLabel $medium>Hide trades</ToolLabel>
      <ToolSep $l={16} $r={13} />
      <ToolLabel $active>Price</ToolLabel>
      <ToolLabel $ml={6} $medium>/ MCap</ToolLabel>
      <ToolSep $l={16} $r={14} />
      <ToolLabel $medium>USD /</ToolLabel>
      <ToolLabel $active $ml={7}>SOL</ToolLabel>
      <ToolSep $l={17} $r={0} />
      <ToolSep $l={12} $r={0} />
      <ToolIcon $ml={15}><Camera size={26} strokeWidth={1.4} /></ToolIcon>
      <ToolIcon $ml={19}><Maximize2 size={20} strokeWidth={1.4} /></ToolIcon>
      <ToolIcon $ml={20}><HexIcon /></ToolIcon>
    </Toolbar>
  );
}

function DrawingTools() {
  return (
    <ToolColumn>
      <ToolItem><Crosshair /></ToolItem>
      <ToolItem><TrendTool /></ToolItem>
      <ToolItem><ChannelTool /></ToolItem>
      <ToolItem><PatternTool /></ToolItem>
      <ToolItem><FibTool /></ToolItem>
      <ToolItem><BrushTool /></ToolItem>
      <ToolItem><TextTool /></ToolItem>
      <ToolItem><SmileTool /></ToolItem>
      <ToolDivider $mt={7} $mb={9} />
      <ToolItem><RulerTool /></ToolItem>
      <ToolItem><ZoomTool /></ToolItem>
      <ToolDivider $mt={9} $mb={7} />
      <ToolItem><MagnetTool /></ToolItem>
      <ToolItem><LockTool /></ToolItem>
    </ToolColumn>
  );
}

function HoldersPanel() {
  return (
    <Holders>
      <TabBar>
        <DrawerToggle />
        {tabsBefore.map(t => <TabText key={t} $mr={15.5}>{t}</TabText>)}
        <TabText $on $mr={3}>Holders 242</TabText>
        <ChefHat size={13} color={red} />
        <RedRate>40.09%</RedRate>
        {tabsAfter.map(t => <TabText key={t}>{t}</TabText>)}
        <Triangle $up $ml={3} />
        <OneClick>
          One Click <Switch />
          <BubbleButton><Bubbles /></BubbleButton>
        </OneClick>
      </TabBar>
      <StatRow>
        {stats.map(s => (
          <Stat key={s.label}>
            <StatText $w={s.w}>{s.label}<b>{s.value}</b></StatText>
            <Spark width="100" height="34" viewBox="0 0 100 34" fill="none" stroke="#9a9a9c" strokeWidth="1.2">
              <polyline points={s.points} />
            </Spark>
          </Stat>
        ))}
      </StatRow>
      <FilterTabs>
        <FilterTab $first>All</FilterTab>
        {filters.map(f => <FilterTab key={f}>{f}</FilterTab>)}
      </FilterTabs>
      <Summary>
        <span>TOP100 Owned:<b>98.68%</b></span>
        <span>TOP100 Avg Cost:<b>$0.0195</b><em>(+117.3%)</em></span>
        <span>TOP100 Avg Sold:<b>$0.01639</b><em>(+158.6%)</em></span>
      </Summary>
      <TableHead>
        <HeadCell>Holder <Funnel size={15} color="#55575b" outline /></HeadCell>
        <HeadCell $on>Owned% <Sort color="#d8d8da" /></HeadCell>
        <HeadCell>SOL Bal/Age</HeadCell>
        <HeadCell>Source/TF Time</HeadCell>
        <HeadCell>Inflow/Amount <Sort /></HeadCell>
        <HeadCell>Pnl <Sort /><UsdLabel>USD</UsdLabel> <GrayCoin size={14} /></HeadCell>
        <HeadCell>Holding Duration</HeadCell>
        <HeadCell>Avg</HeadCell>
      </TableHead>
      <TableRow>
        <HolderCell>
          <FrogAvatar />
          <HolderInfo>
            <HolderName>
              Ccn61...JQa <Pencil /><Leaf /><Person /><Group /><Target size={15} /><Moon />
            </HolderName>
            <OwnBar><OwnFill style={{ width: '87%' }} /></OwnBar>
          </HolderInfo>
        </HolderCell>
        <Cell>4.32%<SubLine>$2.8M</SubLine></Cell>
        <Cell>5.05<SubLine>02/27 06:21:27</SubLine></Cell>
        <Cell>
          <SubLine $color="#8d8f93">BmA7D...EGV <GrayCoin size={15} /></SubLine>
          <SubLine>03/03 00:21:00</SubLine>
        </Cell>
        <Cell $color="#d9607a">-$72.4K<SubLine $color="#d9607a">43.2M</SubLine></Cell>
        <Cell $color="#b0d8b4">+$1.9M<SubLine $color="#b0d8b4">+13979.8%</SubLine></Cell>
        <Cell>16m</Cell>
        <Cell>$<SubLine>$</SubLine></Cell>
      </TableRow>
    </Holders>
  );
}

function RightRail() {
  return (
    <RightColumn>
      <RugChip><RunnerIcon /> Rug</RugChip>
      <InfoCard>
        <InfoHead><Search size={14} /> Name</InfoHead>
        <InfoBlock $pad="10px 15px 7px">MKT Cap<br /><b>$42.4M</b></InfoBlock>
        <InfoBlock $pad="7px 15px 4px">Pair<br />ADA<br />SOL</InfoBlock>
        <InfoBlock $pad="9px 15px" $last>
          NoMint
          <YesRow>Yes <Check size={16} /></YesRow>
        </InfoBlock>
      </InfoCard>
      <ToolsCard>
        <TelegramButton>
          <TelegramDot><Send size={13} fill="#fff" /></TelegramDot>5
        </TelegramButton>
        <DarkButton />
        <AutoLabel>Auto Trade</AutoLabel>
        <FeatureCard><TagIcon /></FeatureCard>
        <FeatureCard><TargetRing /></FeatureCard>
        <FeatureCard><PumpIcon /></FeatureCard>
        <FeatureCard><HatTagIcon /></FeatureCard>
      </ToolsCard>
    </RightColumn>
  );
}

export default function App() {
  return (
    <Root>
      <GlobalStyle />
      <TopBar>
        <TopNav>
          <span>Meme</span><span>New pair</span><span>Trending</span><span>CopyTrade</span>
          <span>Monitor</span><span>Follow</span><span>Holding</span>
        </TopNav>
        <SearchBox>
          <Search size={18} />
          Search token/contract/wallet
          <Kbd>Ctrl alt K</Kbd>
        </SearchBox>
        <NetworkChip><SolMark size={22} /> SOL</NetworkChip>
      </TopBar>
      <Body>
        <LeftRail />
        <Main>
          <TokenInfo />
          <Lower>
            <Center>
              <ChartToolbar />
              <ChartArea>
                <DrawingTools />
                <PlotColumn>
                  <PriceChart />
                  <ChartFoot>
                    <RangeLabel>3m</RangeLabel>
                    <RangeLabel>5d</RangeLabel>
                    <RangeLabel>1d</RangeLabel>
                    <ToolSep $l={7} $r={7} />
                    <CalendarIcon />
                    <FootClock>19:38:25 (UTC)</FootClock>
                    <ToolSep />
                    <RangeLabel $mr={18}>%</RangeLabel>
                    <RangeLabel $mr={16}>log</RangeLabel>
                    <ToolLabel $active>auto</ToolLabel>
                  </ChartFoot>
                </PlotColumn>
              </ChartArea>
              <HoldersPanel />
            </Center>
            <RightRail />
          </Lower>
        </Main>
      </Body>
      <Footer />
    </Root>
  );
}
